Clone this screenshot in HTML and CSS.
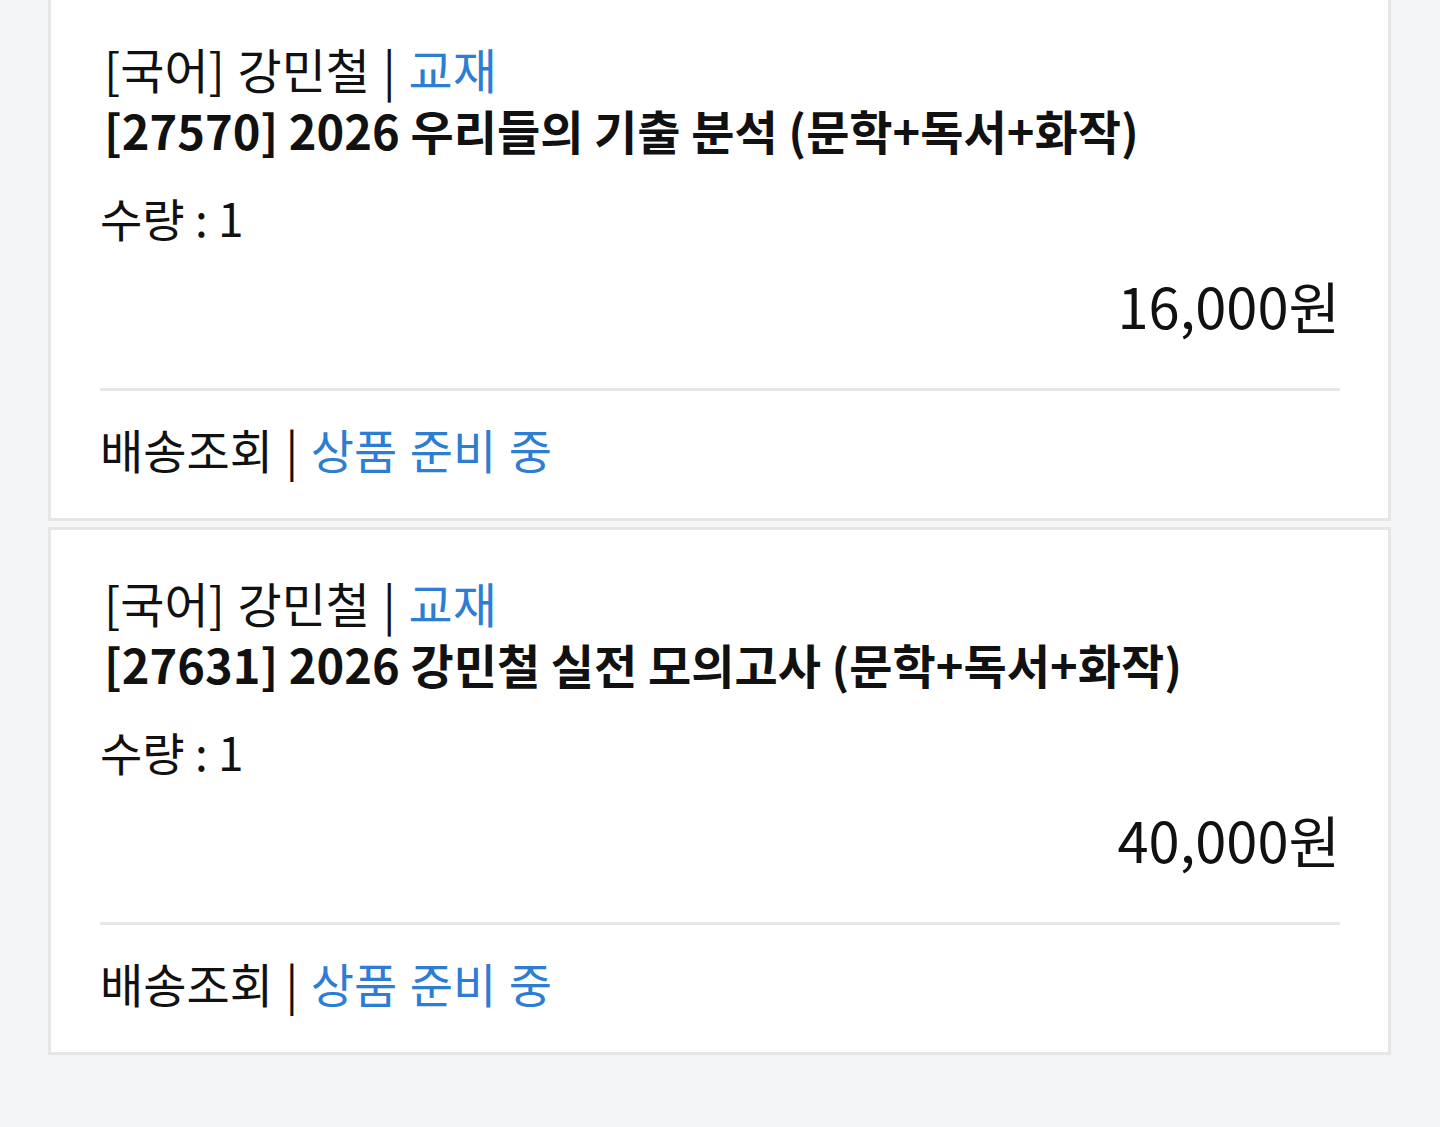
FILE: index.html
```html
<!DOCTYPE html>
<html>
<head>
    <meta charset="utf-8" />
    <title>주문 상품</title>
    <link rel="stylesheet" href="styles.css">
</head>
<body>
    <div class="order-list">
        <div class="card">
            <div class="info">
                <p class="cat">[국어] 강민철 | <span class="blue">교재</span></p>
                <p class="title">[27570] 2026 우리들의 기출 분석 (문학+독서+화작)</p>
                <p class="qty">수량 : 1</p>
                <p class="price">16,000원</p>
            </div>
            <div class="ship">배송조회 | <span class="blue">상품 준비 중</span></div>
        </div>

        <div class="card">
            <div class="info">
                <p class="cat">[국어] 강민철 | <span class="blue">교재</span></p>
                <p class="title">[27631] 2026 강민철 실전 모의고사 (문학+독서+화작)</p>
                <p class="qty">수량 : 1</p>
                <p class="price">40,000원</p>
            </div>
            <div class="ship">배송조회 | <span class="blue">상품 준비 중</span></div>
        </div>
    </div>
</body>
</html>
```

FILE: styles.css
```css
body {
    margin: 0;
    background-color: #f4f5f7;
    font-family: "Noto Sans CJK KR", "Noto Sans", sans-serif;
    color: #111;
    overflow: hidden;
}

p {
    margin: 0;
}

.order-list {
    display: flex;
    flex-direction: column;
    gap: 6px;
    width: 1343px;
    margin: -7px 0 0 48px;
}

.card {
    background-color: #fff;
    border: 3px solid #e6e6e7;
}

.info {
    padding: 41px 48px 52px 49px;
}

.cat, .title {
    font-size: 48px;
    line-height: 62px;
    padding-left: 4px;
}

.cat {
    word-spacing: 2px;
}

.title {
    font-size: 47px;
    font-weight: 700;
}

.qty {
    margin-top: 25px;
    font-size: 46px;
    line-height: 62px;
}

.price {
    margin-top: 26px;
    font-size: 56px;
    line-height: 62px;
    text-align: right;
}

.ship {
    margin: 0 48px 0 49px;
    border-top: 3px solid #e6e6e7;
    padding: 27px 0 38px;
    font-size: 47px;
    line-height: 62px;
    word-spacing: 2px;
}

.blue {
    color: #2d7dd2;
}
```
